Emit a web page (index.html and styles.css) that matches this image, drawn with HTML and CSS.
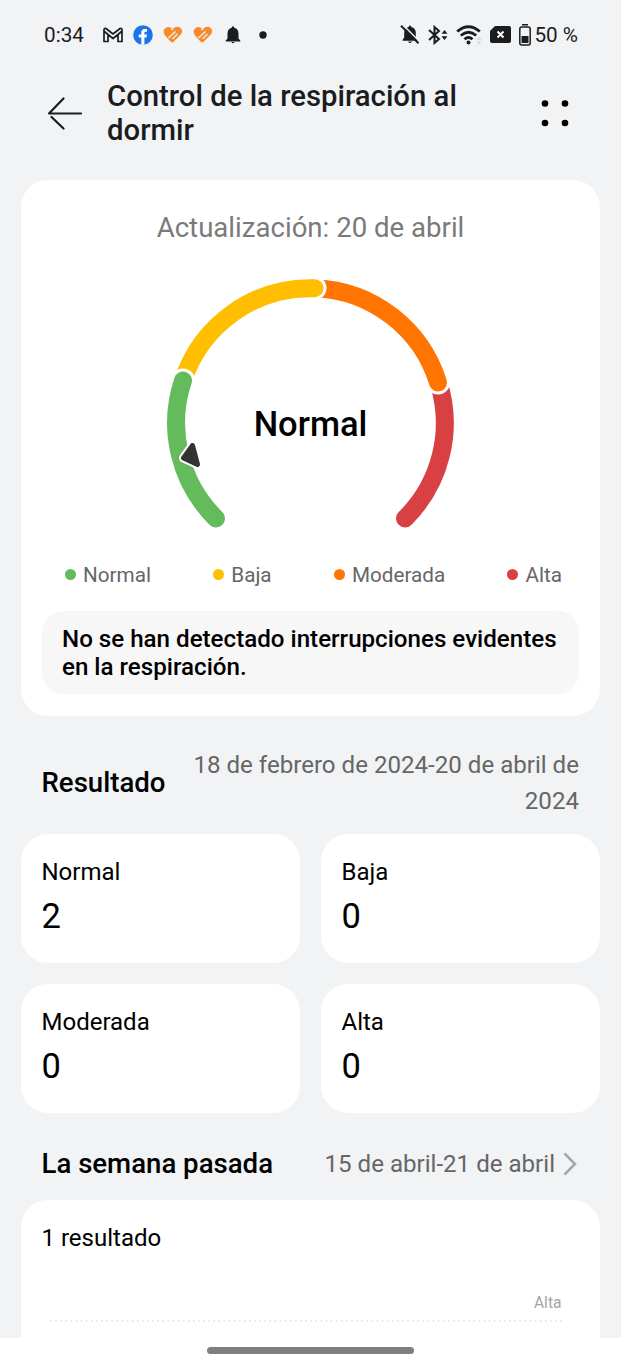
FILE: index.html
```html
<!DOCTYPE html>
<html lang="es">
<head>
  <meta charset="UTF-8">
  <title>Control de la respiración al dormir</title>
  <link rel="stylesheet" href="styles.css">
</head>
<body>
  <div class="screen">
    <div class="status">
      <span class="time">0:34</span>
      <div class="notices">
        <svg width="20" height="16" viewBox="0 0 20 16" fill="none" stroke="#1b1c1e" stroke-width="1.700" stroke-linejoin="round">
          <path d="M1 14.500V3Q1 1 3 1.500L10 7L17 1.500Q19 1 19 3V14.500H15V7.500L10 11.500L5 7.500V14.500ZM5 7.500L1.500 4.500M15 7.500L18.500 4.500"/>
        </svg>
        <svg width="20" height="20" viewBox="0 0 20 20">
          <circle cx="10" cy="10" r="9.800" fill="#1b74e8"/>
          <path fill="#fff" d="M8.300 19.700V12.500H5.800V9.500H8.300V7.500Q8.300 4 11.800 4H14V6.700H12.600Q11.400 6.700 11.400 8V9.500H14L13.500 12.500H11.400V19.700Z"/>
        </svg>
        <svg width="20" height="18" viewBox="0 0 20 18">
          <path fill="#f98a2b" d="M9.500 3.200L11 2Q14.500-.5 17.500 1.800Q20.500 5 18 8.300L10.500 16Q9 17.200 7.500 15.500L2 9.500Q-.5 6 1.500 3Q4.500-.5 8 1.800Z"/>
          <path fill="none" stroke="#f1f3f5" stroke-width="1.300" d="M10 2.500L8.500 4M5.500 12L12.500 5.500M9.500 13L14.500 8"/>
        </svg>
        <svg width="20" height="18" viewBox="0 0 20 18">
          <path fill="#f98a2b" d="M9.500 3.200L11 2Q14.500-.5 17.500 1.800Q20.500 5 18 8.300L10.500 16Q9 17.200 7.500 15.500L2 9.500Q-.5 6 1.500 3Q4.500-.5 8 1.800Z"/>
          <path fill="none" stroke="#f1f3f5" stroke-width="1.300" d="M10 2.500L8.500 4M5.500 12L12.500 5.500M9.500 13L14.500 8"/>
        </svg>
        <svg width="20" height="18" viewBox="0 0 20 18" fill="#1b1c1e">
          <path d="M8.800 1.700V1Q10-.5 11.200 1V1.700Q15.500 2.700 15.500 7.500V12.500L17.300 14.500V15.500H2.700V14.500L4.500 12.500V7.500Q4.500 2.700 8.800 1.700ZM8.300 16H11.700Q10 18.500 8.300 16Z"/>
        </svg>
        <svg width="20" height="8" viewBox="0 0 20 8"><circle cx="10" cy="4" r="3.700" fill="#1b1c1e"/></svg>
      </div>
      <div class="signals">
        <svg width="20" height="20" viewBox="0 0 20 20" fill="#1b1c1e">
          <path d="M8.800 2V1.300Q10-.2 11.200 1.300V2Q15.800 3 15.800 8V12.500L17.500 14.500V15.800H2.500V15L4.200 12.500V8Q4.200 3 8.800 2ZM8 16.500H12Q10 19.500 8 16.500Z"/>
          <path d="M3 0L20 17" stroke="#f1f3f5" stroke-width="1.500"/>
          <path d="M1 .8L18.500 18.300" stroke="#1b1c1e" stroke-width="2"/>
        </svg>
        <svg width="20" height="20" viewBox="0 0 20 20" fill="none" stroke="#1b1c1e" stroke-width="2">
          <path d="M1 5L11 14L6.500 18V2L11 6L1 15"/>
          <path d="M13.500 8.800L16.500 5L19.500 8.800ZM13.500 11.200L16.500 15L19.500 11.200Z" fill="#1b1c1e" stroke="none"/>
        </svg>
        <svg width="26" height="20" viewBox="0 0 26 20" fill="none" stroke="#1b1c1e" stroke-width="2.800">
          <path d="M1.200 6.500Q12.500-3 23.800 6.500M4.800 10.500Q12.500 4 20.200 10.500M8.500 14.300Q12.500 10.800 16.500 14.300"/>
          <circle cx="12.500" cy="17.500" r="2" fill="#1b1c1e" stroke="none"/>
          <path d="M20.500 14.700L23 11.700L25.500 14.700ZM20.500 16.500L23 19.500L25.500 16.500Z" fill="#d6d7d9" stroke="none"/>
        </svg>
        <svg width="21" height="17" viewBox="0 0 21 17">
          <path fill="#1b1c1e" d="M5 0H19Q21 0 21 2V15Q21 17 19 17H2Q0 17 0 15V5Z"/>
          <path stroke="#fff" stroke-width="2" d="M7.500 5.500L13.500 11.500M13.500 5.500L7.500 11.500"/>
        </svg>
        <svg width="12" height="22" viewBox="0 0 12 22">
          <rect x=".8" y="3" width="10.400" height="18" rx="2" fill="none" stroke="#1b1c1e" stroke-width="1.500"/>
          <path fill="#1b1c1e" d="M3 0H9V1.500H3ZM2.500 12H9.500V19H2.500Z"/>
        </svg>
      </div>
      <span class="battery">50 %</span>
    </div>

    <div class="header">
      <svg class="back" width="36" height="34" viewBox="0 0 36 34" fill="none" stroke="#1b1c1e" stroke-width="2.200" stroke-linecap="round" stroke-linejoin="round">
        <path d="M34 17.500H2L16.500 2.500M4.500 21L16.500 32.500"/>
      </svg>
      <h1 class="title">Control de la respiración al dormir</h1>
      <svg class="more" width="28" height="28" viewBox="0 0 28 28">
        <circle cx="4" cy="4.500" r="3.300"/><circle cx="24" cy="4.500" r="3.300"/>
        <circle cx="4" cy="24" r="3.300"/><circle cx="24" cy="24" r="3.300"/>
      </svg>
    </div>

    <div class="card summary">
      <div class="updated">Actualización: 20 de abril</div>
      <div class="gauge">
        <!-- cada tramo tapa el inicio del siguiente, por eso van de derecha a izquierda -->
        <svg width="300" height="262" viewBox="-149.500 -150.500 300 262" fill="none" stroke-width="18" stroke-linecap="round">
          <path stroke="#d94043" d="M128 -40A134.300 134.300 0 0 1 94.500 96"/>
          <circle cx="127.500" cy="-40" r="12" fill="#fff"/>
          <path stroke="#ff7500" d="M5 -134.300A134.300 134.300 0 0 1 127.500 -40"/>
          <circle cx="4" cy="-134.500" r="12" fill="#fff"/>
          <path stroke="#ffbf00" d="M-127.500 -42A134.300 134.300 0 0 1 4 -134.300"/>
          <circle cx="-127.500" cy="-42" r="12" fill="#fff"/>
          <path stroke="#64bb5c" d="M-94.500 96A134.300 134.300 0 0 1 -127.500 -42"/>
          <path d="M-118 23L-127 35.500L-113 42Z" fill="#fff" stroke="#fff" stroke-width="9" stroke-linejoin="round"/>
          <path d="M-118 23L-127 35.500L-113 42Z" fill="#333" stroke="#333" stroke-width="5" stroke-linejoin="round"/>
        </svg>
        <span class="level">Normal</span>
      </div>
      <div class="legend">
        <span class="item normal">Normal</span>
        <span class="item low">Baja</span>
        <span class="item moderate">Moderada</span>
        <span class="item high">Alta</span>
      </div>
      <p class="message">No se han detectado interrupciones evidentes en la respiración.</p>
    </div>

    <div class="section">
      <h2>Resultado</h2>
      <span class="range">18 de febrero de 2024-20 de abril de 2024</span>
    </div>
    <div class="results">
      <div class="card result"><span>Normal</span><b>2</b></div>
      <div class="card result"><span>Baja</span><b>0</b></div>
      <div class="card result"><span>Moderada</span><b>0</b></div>
      <div class="card result"><span>Alta</span><b>0</b></div>
    </div>

    <div class="section week">
      <h2>La semana pasada</h2>
      <span class="range">15 de abril-21 de abril</span>
      <svg width="14" height="24" viewBox="0 0 14 24" fill="none" stroke="#a5a6a8" stroke-width="2.500">
        <path d="M1.500 1.500L12 12L1.500 22.500"/>
      </svg>
    </div>
    <div class="card chart">
      <div class="count">1 resultado</div>
      <div class="axis">Alta</div>
      <svg class="line" width="514" height="2"><path d="M0 1H514" stroke="#e3e3e3" stroke-width="1.500" stroke-dasharray="2 3.100"/></svg>
    </div>
  </div>
  <div class="nav"><div class="handle"></div></div>
</body>
</html>
```
FILE: styles.css
```css
body {
  display: flex;
  flex-direction: column;
  width: 621px;
  height: 1366px;
  margin: 0;
  overflow: hidden;
  background: #fff;
  color: #000;
  font-family: Roboto, sans-serif;
}
h1, h2, p {
  margin: 0;
  font-weight: 500;
}
svg {
  display: block;
  flex: none;
}
.screen {
  height: 1338px;
  box-sizing: border-box;
  padding: 0 21px;
  overflow: hidden;
  background: #f1f3f5;
}
.card {
  background: #fff;
  border-radius: 27px;
}

/* barra de estado */
.status {
  display: flex;
  align-items: center;
  height: 69px;
  padding: 0 22px;
  font-size: 20.7px;
  color: #1b1c1e;
}
.time {
  width: 59px;
  padding-left: 1px;
}
.notices {
  display: flex;
  align-items: center;
  gap: 10px;
}
.signals {
  display: flex;
  align-items: center;
  gap: 8px;
  margin-left: auto;
}
.battery {
  margin-left: 3px;
}

/* cabecera */
.header {
  display: flex;
  align-items: center;
  height: 111px;
  box-sizing: border-box;
  padding: 0 31px 23px 26px;
}
.title {
  width: 380px;
  margin-left: 24px;
  font-size: 29.3px;
  line-height: 34px;
  color: #1b1c1e;
}
.more {
  margin-left: auto;
}

/* resumen */
.summary {
  height: 536px;
  box-sizing: border-box;
  margin-top: -.5px;
  padding: 30px 21px 0;
}
.updated {
  font-size: 27.6px;
  line-height: 36px;
  text-align: center;
  color: #7a7a7a;
}
.gauge {
  display: grid;
  justify-items: center;
  margin-top: 26px;
}
.gauge svg, .level {
  grid-area: 1 / 1;
}
.level {
  padding-top: 132px;
  font-size: 34.5px;
  font-weight: 500;
  line-height: 40px;
}
.legend {
  display: flex;
  justify-content: space-between;
  margin-top: 28px;
  padding: 0 17px 0 23px;
  font-size: 20.7px;
  line-height: 26px;
  color: #666;
}
.item {
  display: flex;
  align-items: center;
  gap: 7px;
}
.item::before {
  content: "";
  width: 11px;
  height: 11px;
  border-radius: 50%;
}
.normal::before { background: #64bb5c; }
.low::before { background: #ffbf00; }
.moderate::before { background: #ff7500; }
.high::before { background: #d94043; }
.message {
  height: 83px;
  box-sizing: border-box;
  margin-top: 23px;
  padding: 14px 20px;
  border-radius: 21px;
  background: #f7f7f7;
  font-size: 24.15px;
  line-height: 28px;
}

/* resultados */
.section {
  display: flex;
  align-items: center;
  justify-content: space-between;
  height: 118px;
  box-sizing: border-box;
  padding: 16px 21px 0 20.5px;
}
.section h2 {
  font-size: 27.6px;
  line-height: 32px;
}
.range {
  width: 400px;
  font-size: 24.1px;
  line-height: 36px;
  text-align: right;
  color: #666;
}
.results {
  display: grid;
  grid-template-columns: 1fr 1fr;
  gap: 21px;
}
.result {
  display: flex;
  flex-direction: column;
  height: 129px;
  box-sizing: border-box;
  padding: 24px 20.5px 0;
  font-size: 24px;
  line-height: 28px;
}
.result b {
  margin-top: 10px;
  font-size: 34.5px;
  font-weight: 400;
  line-height: 41px;
}

/* semana pasada */
.week {
  height: 87.5px;
}
.week .range {
  width: auto;
  margin-left: auto;
  margin-right: 8px;
}
.week svg {
  margin-right: 2px;
}
.chart {
  height: 160px;
  box-sizing: border-box;
  padding: 24px 20.5px 0;
}
.count {
  font-size: 24px;
  line-height: 28px;
}
.axis {
  margin: 41px 18px 0 0;
  font-size: 15.6px;
  line-height: 20px;
  text-align: right;
  color: #a5a5a5;
}
.line {
  margin: 7px 0 0 8px;
}

/* barra de navegación */
.nav {
  display: flex;
  justify-content: center;
  padding-top: 9px;
}
.handle {
  width: 207px;
  height: 7px;
  border-radius: 4px;
  background: #808080;
}
```
